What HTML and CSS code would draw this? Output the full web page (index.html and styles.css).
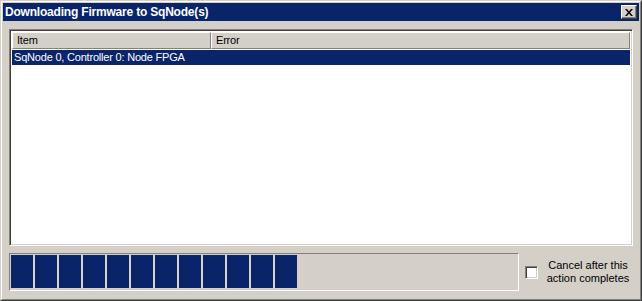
FILE: index.html
```html
<!DOCTYPE html>
<html lang="en">
<head>
    <meta charset="UTF-8">
    <title>Downloading Firmware to SqNode(s)</title>
    <link rel="stylesheet" href="styles.css">
</head>
<body>
    <!-- Fenetre de dialogue -->
    <div class="window">
        <div class="frame">
            <div class="titlebar">
                <span class="title">Downloading Firmware to SqNode(s)</span>
                <button type="button" class="close-btn" title="Close">
                    <svg width="8" height="7" viewBox="0 0 8 7">
                        <path d="M0 0h2l2 2.5 2-2.5h2l-3 3.5 3 3.5h-2l-2-2.5-2 2.5h-2l3-3.5z" fill="#000"/>
                    </svg>
                </button>
            </div>

            <div class="content">
                <!-- Liste des elements -->
                <div class="listbox">
                    <div class="list-header">
                        <div class="col col-item">Item</div>
                        <div class="col col-error">Error</div>
                    </div>
                    <div class="list-row selected">SqNode 0, Controller 0: Node FPGA</div>
                </div>

                <!-- Barre de progression -->
                <div class="bottom">
                    <div class="progress">
                        <div class="block"></div>
                        <div class="block"></div>
                        <div class="block"></div>
                        <div class="block"></div>
                        <div class="block"></div>
                        <div class="block"></div>
                        <div class="block"></div>
                        <div class="block"></div>
                        <div class="block"></div>
                        <div class="block"></div>
                        <div class="block"></div>
                        <div class="block"></div>
                    </div>
                    <label class="cancel">
                        <span class="checkbox"></span>
                        <span class="cancel-text">Cancel after this action completes</span>
                    </label>
                </div>
            </div>
        </div>
    </div>
</body>
</html>
```

FILE: styles.css
```css
/* Style general */
* {
    box-sizing: border-box;
    font-family: 'Liberation Sans', Arial, sans-serif;
}
body {
    margin: 0;
    background: #d4d0c8;
}

/* Fenetre */
.window {
    width: 642px;
    height: 301px;
    border: 1px solid;
    border-color: #d4d0c8 #404040 #404040 #d4d0c8;
    background: #d4d0c8;
}
.frame {
    height: 100%;
    border: 1px solid;
    border-color: #fff #808080 #808080 #fff;
    padding: 1px;
    display: flex;
    flex-direction: column;
}

/* Barre de titre */
.titlebar {
    height: 18px;
    background: #0a246a;
    color: #fff;
    display: flex;
    align-items: center;
    justify-content: space-between;
    padding: 0 2px;
}
.title {
    font-size: 12px;
    font-weight: bold;
    letter-spacing: -0.2px;
}
.close-btn {
    width: 16px;
    height: 14px;
    padding: 0;
    background: #d4d0c8;
    border: 1px solid;
    border-color: #fff #404040 #404040 #fff;
    box-shadow: inset -1px -1px #808080;
    display: flex;
    align-items: center;
    justify-content: center;
}

/* Contenu */
.content {
    flex: 1;
    padding: 8px 6px 7px 6px;
    display: flex;
    flex-direction: column;
    gap: 7px;
}

.listbox {
    flex: 1;
    background: #fff;
    border: 1px solid;
    border-color: #808080 #fff #fff #808080;
    box-shadow: inset 1px 1px #404040, inset -1px -1px #d4d0c8;
    padding: 2px;
    font-size: 11px;
    letter-spacing: -0.2px;
}
.list-header {
    display: flex;
    height: 17px;
}
.col {
    background: #d4d0c8;
    border: 1px solid;
    border-color: #fff #808080 #808080 #fff;
    padding-left: 4px;
    line-height: 15px;
    color: #000;
}
.col-item {
    width: 199px;
}
.col-error {
    flex: 1;
}
.list-row {
    height: 15px;
    margin-top: 1px;
    padding-left: 2px;
    line-height: 15px;
}
.selected {
    background: #0a246a;
    color: #fff;
}

/* Bas de la fenetre */
.bottom {
    display: flex;
    align-items: center;
    height: 38px;
}
.progress {
    width: 510px;
    height: 38px;
    border: 1px solid;
    border-color: #808080 #fff #fff #808080;
    padding: 1px;
    display: flex;
    gap: 2px;
    align-items: flex-start;
}
.block {
    width: 22px;
    height: 33px;
    background: #0a246a;
}
.cancel {
    display: flex;
    align-items: center;
}
.checkbox {
    width: 13px;
    height: 13px;
    margin-left: 6px;
    background: #fff;
    border: 1px solid;
    border-color: #808080 #fff #fff #808080;
    box-shadow: inset 1px 1px #404040, inset -1px -1px #d4d0c8;
}
.cancel-text {
    width: 84px;
    margin-left: 8px;
    font-size: 11px;
    line-height: 13px;
    text-align: center;
}
```
